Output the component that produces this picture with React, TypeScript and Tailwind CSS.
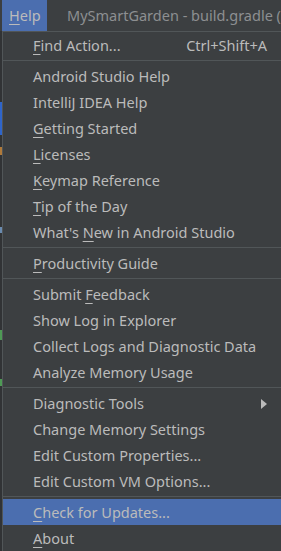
import React from "react";

type Item = { label: string; u?: number; shortcut?: string; sub?: boolean; active?: boolean } | "sep";

const items: Item[] = [
  { label: "Find Action...", u: 0, shortcut: "Ctrl+Shift+A" },
  "sep",
  { label: "Android Studio Help" },
  { label: "IntelliJ IDEA Help" },
  { label: "Getting Started", u: 0 },
  { label: "Licenses", u: 0 },
  { label: "Keymap Reference", u: 0 },
  { label: "Tip of the Day", u: 0 },
  { label: "What's New in Android Studio", u: 7 },
  "sep",
  { label: "Productivity Guide", u: 0 },
  "sep",
  { label: "Submit Feedback", u: 7 },
  { label: "Show Log in Explorer" },
  { label: "Collect Logs and Diagnostic Data" },
  { label: "Analyze Memory Usage" },
  "sep",
  { label: "Diagnostic Tools", sub: true },
  { label: "Change Memory Settings" },
  { label: "Edit Custom Properties..." },
  { label: "Edit Custom VM Options..." },
  "sep",
  { label: "Check for Updates...", u: 0, active: true },
  { label: "About", u: 0 },
];

function Label({ text, u }: { text: string; u?: number }) {
  if (u === undefined) return <span>{text}</span>;
  return (
    <span>
      {text.slice(0, u)}
      <span className="underline underline-offset-[3px] decoration-1">{text[u]}</span>
      {text.slice(u + 1)}
    </span>
  );
}

export default function App() {
  return (
    <div
      className="w-[281px] h-[551px] bg-[#3c3f41] overflow-hidden flex flex-col text-[#bbbbbb] text-[14.5px]"
      style={{ fontFamily: '"Noto Sans", "Open Sans", sans-serif' }}
    >
      <div className="h-[31px] flex items-stretch whitespace-nowrap shrink-0">
        <div className="ml-[2px] w-[45px] bg-[#4b6eaf] flex items-center pl-[7px]">
          <Label text="Help" u={0} />
        </div>
        <div className="ml-[20px] flex items-center text-[#8d8f91]">MySmartGarden - build.gradle (</div>
      </div>
      <div className="flex flex-1 min-h-0">
        <div className="w-[2px] flex flex-col bg-[#313335]">
          <div className="h-[71px]" />
          <div className="h-[33px] bg-[#2f65ca]" />
          <div className="h-[12px]" />
          <div className="h-[8px] bg-[#b07a3a]" />
          <div className="h-[72px]" />
          <div className="h-[6px] bg-[#6a8bb0]" />
          <div className="h-[97px]" />
          <div className="h-[10px] bg-[#4e9a55]" />
          <div className="h-[39px]" />
          <div className="h-[7px] bg-[#4e9a55]" />
        </div>
        <div className="flex-1 border-l border-t border-[#515658] flex flex-col whitespace-nowrap">
          {items.map((it, i) =>
            it === "sep" ? (
              <div key={i} className="h-[5px] flex items-center shrink-0">
                <div className="h-px w-full bg-[#515658]" />
              </div>
            ) : (
              <div
                key={i}
                className={`h-[26px] shrink-0 flex items-center pl-[30px] pr-[14px] pt-px ${it.active ? "bg-[#4b6eaf]" : ""}`}
              >
                <Label text={it.label} u={it.u} />
                {it.shortcut && <span className="ml-auto">{it.shortcut}</span>}
                {it.sub && (
                  <svg className="ml-auto" width="6" height="10" viewBox="0 0 6 10">
                    <path d="M0 0 L6 5 L0 10 Z" fill="#bbbbbb" />
                  </svg>
                )}
              </div>
            )
          )}
        </div>
      </div>
    </div>
  );
}
